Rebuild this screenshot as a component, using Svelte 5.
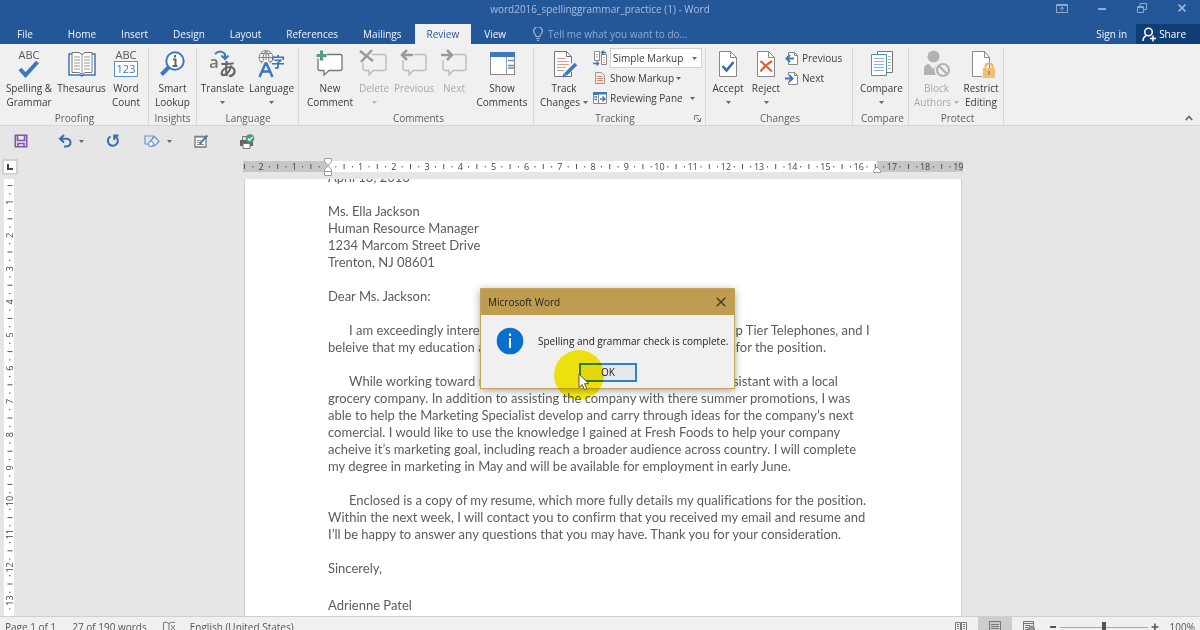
<script>
  const tabs = ['File', 'Home', 'Insert', 'Design', 'Layout', 'References', 'Mailings', 'Review', 'View'];
  let active = $state('Review');
  let markup = $state('Simple Markup');
  let zoom = $state(100);
  let dialogOpen = $state(true);

  const CM = 33.2;
  const hMarks = Array.from({ length: 87 }, (_, i) => i - 10);
  const vMarks = Array.from({ length: 53 }, (_, i) => i + 1);
</script>

{#snippet caret(dim = false)}
  <svg class="caret" width="5" height="3" viewBox="0 0 5 3" aria-hidden="true"><path d="M0 0h5L2.500 3z" fill={dim ? '#b5b5b5' : '#666'} /></svg>
{/snippet}

{#snippet icon(name)}
  <svg class="icon" width="28" height="28" viewBox="0 0 28 28" fill="none" aria-hidden="true">
    {#if name === 'spelling'}
      <text x="14" y="9" class="glyph" font-size="11" text-anchor="middle" fill="#555">ABC</text>
      <path d="M5 19l5.500 6L22.500 12" stroke="#3c78bd" stroke-width="4" />
    {:else if name === 'thesaurus'}
      <path d="M1 4h11l2 1 2-1h11v21H16l-2 1-2-1H1z" fill="#fff" stroke="#3c78bd" stroke-width="1.500" />
      <path d="M4 2.500h7l3 2 3-2h7v20h-7l-3 2-3-2H4z" fill="#fff" stroke="#777" />
      <path d="M14 5v19M6 7h6M6 10h6M6 13h6M6 16h6M6 19h6M16 7h6M16 10h6M16 13h6M16 16h6M16 19h6" stroke="#999" />
    {:else if name === 'count'}
      <text x="14" y="9" class="glyph" font-size="11" text-anchor="middle" fill="#555">ABC</text>
      <rect x="2.500" y="11.500" width="23" height="15" fill="#fff" stroke="#5b8fca" />
      <text x="14" y="23" class="glyph" font-size="11" text-anchor="middle" fill="#3c78bd">123</text>
    {:else if name === 'lookup'}
      <path d="M10 17L2.500 24.500" stroke="#3c78bd" stroke-width="4" />
      <circle cx="16" cy="11" r="8.700" fill="#fff" stroke="#3c78bd" stroke-width="2" />
      <path d="M16 5v2.500M14 9.500h2.500V16M13.500 16h5" stroke="#666" stroke-width="2" />
    {:else if name === 'translate'}
      <text x="0" y="18" class="glyph strong" font-size="17" fill="#777">a</text>
      <text x="10" y="26" class="glyph strong" font-size="18" fill="#666">あ</text>
      <path d="M6 4q5-5 10 0v4M12.500 5.500L16 9l3.500-3.500" stroke="#3c78bd" stroke-width="2" />
    {:else if name === 'language'}
      <circle cx="8" cy="7.500" r="7" stroke="#888" />
      <path d="M1 7.500h14M2.500 3.500h11M2.500 11.500h11M8 .5v14M8 .5q-6 7 0 14M8 .5q6 7 0 14" stroke="#888" />
      <text x="13" y="17" class="glyph strong" font-size="14" fill="#3c78bd">字</text>
      <path d="M1 27L7.500 12.500h1L15 27M4 21.500h8" stroke="#f0f0f0" stroke-width="5" />
      <path d="M1.500 27L7.500 13.500h1L14.500 27M4 21.500h8" stroke="#3c78bd" stroke-width="2.500" />
    {:else if name === 'newcomment'}
      <path d="M7 4.500h17q2 0 2 2v12q0 2-2 2H13L8 25v-4.500H4q-2 0-2-2v-10" fill="#fff" stroke="#777" stroke-width="1.300" />
      <path d="M5.500 0v11M0 5.500h11" stroke="#f0f0f0" stroke-width="5" />
      <path d="M5.500 .5v10M.5 5.500h10" stroke="#5a9b7c" stroke-width="3" />
    {:else if name === 'delete'}
      <path d="M12 4.500h12.500q1.500 0 1.500 1.500v13q0 1.500-1.500 1.500H13L9 25v-4.500H5q-2 0-2-1.500v-6" stroke="#bbb" stroke-width="1.300" />
      <path d="M0 1l13 10M12 0L1 12" stroke="#999" stroke-width="2.500" />
    {:else if name === 'prev'}
      <path d="M14 4.500h10.500q1.500 0 1.500 1.500v13q0 1.500-1.500 1.500H13L9 25v-4.500H5q-2 0-2-1.500v-9" stroke="#bbb" stroke-width="1.300" />
      <path d="M13 5H2M7 0L2 5l5 5" stroke="#999" stroke-width="2.500" />
    {:else if name === 'next'}
      <path d="M14 4.500h10.500q1.500 0 1.500 1.500v13q0 1.500-1.500 1.500H13L9 25v-4.500H5q-2 0-2-1.500v-9" stroke="#bbb" stroke-width="1.300" />
      <path d="M1 5h11M7 0l5 5-5 5" stroke="#999" stroke-width="2.500" />
    {:else if name === 'show'}
      <rect x="2.500" y="2.500" width="24" height="22" fill="#fff" stroke="#888" />
      <path d="M2 2h25v5H2z" fill="#3c78bd" />
      <path d="M18.500 7v17.500" stroke="#999" />
      <path d="M20 10.500h6M20 15.500h6M20 18h6" stroke="#5b8fca" stroke-width="1.500" />
    {:else if name === 'track'}
      <path d="M4.500 1.500h12l5 5v20h-17z" fill="#fff" stroke="#777" />
      <path d="M16.500 1.500v5h5" stroke="#777" />
      <path d="M7 8.500h8M7 11.500h12M7 14.500h12M7 17.500h9M7 20.500h7" stroke="#d99b80" />
      <path d="M25.500 13.500L15 24" stroke="#f0f0f0" stroke-width="6" />
      <path d="M26 14L15.500 24.500" stroke="#3c78bd" stroke-width="3.600" />
      <path d="M12.500 27.500l1-4.500 3.500 3.500z" fill="#3c78bd" />
    {:else if name === 'accept' || name === 'reject'}
      <path d="M5.500 1.500h11l6 6v19h-17z" fill="#fff" stroke="#888" />
      <path d="M16.500 1.500v6h6" stroke="#888" />
      {#if name === 'accept'}
        <path d="M8.500 16l4 4.500 7-8.500" stroke="#3c6cb0" stroke-width="2.600" />
      {:else}
        <path d="M8.500 11l11.500 10.500M20 11Q13 15 8.500 21.500" stroke="#dd6236" stroke-width="2.200" />
      {/if}
    {:else if name === 'compare'}
      <path d="M9.500 1.500h15v21h-15z" fill="#fff" stroke="#777" />
      <path d="M20 6.500h3M20 9.500h3M20 12.500h3M20 15.500h3M20 18.500h3" stroke="#aaa" />
      <path d="M3.500 4.500h15v21h-15z" fill="#fff" stroke="#5590a8" />
      <path d="M6 8.500h10M6 11.500h10M6 14.500h10M6 17.500h10M6 20.500h10" stroke="#8fb3d8" />
    {:else if name === 'block'}
      <circle cx="10.500" cy="6.500" r="6" fill="#b2b2b2" />
      <path d="M1 25v-6q0-4.500 5-5l4 5 4-5q4 0 5 4v7z" fill="#b2b2b2" />
      <circle cx="20" cy="20" r="8.500" fill="#f0f0f0" />
      <circle cx="20" cy="20" r="6" stroke="#b2b2b2" stroke-width="2.200" />
      <path d="M16 16l8 8" stroke="#b2b2b2" stroke-width="2.200" />
    {:else if name === 'restrict'}
      <path d="M5.500 1.500h12l5 6v19h-17z" fill="#fff" stroke="#888" />
      <path d="M17.500 1.500v6h5" stroke="#888" />
      <path d="M15 18h14v11H15z" fill="#f0f0f0" />
      <path d="M18.500 19v-2.500q0-3 3.500-3t3.500 3V19" stroke="#e3b766" stroke-width="2" />
      <path d="M16 18h12v10H16z" fill="#efc070" />
      <path d="M22 21v4" stroke="#b58a3c" stroke-width="1.500" />
    {/if}
  </svg>
{/snippet}

{#snippet mini(name)}
  <svg class="mini" width="16" height="16" viewBox="0 0 16 16" fill="none" aria-hidden="true">
    {#if name === 'simple'}
      <path d="M2.500 1.500h5v9h-5zM9.500 4.500h5v10h-5z" fill="#fff" stroke="#888" />
      <path d="M4 4.500h2M4 7h2M11 7.500h2M11 10h2M11 12.500h2" stroke="#d99b80" />
      <path d="M14 2.500H10M11.500 .5l-2 2 2 2M1 13.500h5M4.500 11.500l2 2-2 2" stroke="#3c78bd" stroke-width="1.400" />
    {:else if name === 'showmarkup'}
      <path d="M3.500 2.500h6l3 3v8h-9z" fill="#f8e9e3" stroke="#999" />
      <path d="M5 6.500h5M5 8.500h6M5 10.500h6" stroke="#d58a6b" />
    {:else if name === 'pane'}
      <path d="M1.500 2.500h13v11h-13z" fill="#fff" stroke="#888" />
      <path d="M1 2h14v2.500H1zM1 4h5v1H1z" fill="#3c78bd" />
      <path d="M6.500 4v9.500" stroke="#888" />
      <path d="M2.500 7h2.500M2.500 9.500h2.500M8 9h5M10.500 6.500L13 9l-2.500 2.500" stroke="#3c78bd" stroke-width="1.400" />
    {:else}
      <path d="M4.500 5V2.500h6l3 3v9h-9V12" fill="#fff" stroke="#888" />
      <path d="M10.500 2.500v3h3" stroke="#888" />
      {#if name === 'left'}
        <path d="M10 8.500H3M6 5L2.500 8.500 6 12" stroke="#3c78bd" stroke-width="2" />
      {:else}
        <path d="M1 8.500h7M5 5l3.500 3.500L5 12" stroke="#3c78bd" stroke-width="2" />
      {/if}
    {/if}
  </svg>
{/snippet}

{#snippet big(name, line1, line2, size, drop = '', disabled = false)}
  <button class="big {size}" {disabled}>
    {@render icon(name)}
    <span>{line1}</span>
    <span class="second">{line2}{#if drop}{@render caret(disabled)}{/if}</span>
  </button>
{/snippet}

<div class="app">
  <header class="title">
    <span></span>
    <h1>word2016_spellinggrammar_practice (1) - Word</h1>
    <div class="window">
      <button aria-label="Ribbon display options"><svg width="12" height="10" viewBox="0 0 12 10" fill="none" stroke="#8fa9cf"><path d="M.5 1.500h11v8H.5zM.5 2.500h11M6 8V4.500M4 6l2-2 2 2" /></svg></button>
      <button aria-label="Minimize"><svg width="12" height="10" viewBox="0 0 12 10"><path d="M2 5h8v2H2z" fill="#8fa9cf" /></svg></button>
      <button aria-label="Restore"><svg width="12" height="10" viewBox="0 0 12 10" fill="none" stroke="#8fa9cf"><path d="M1.500 3.500h6v6h-6zM4 3V.5h6.500v6H8M1.500 4.500h6" /></svg></button>
      <button aria-label="Close"><svg width="12" height="10" viewBox="0 0 12 10" fill="none" stroke="#a9bcda" stroke-width="1.600"><path d="M2.500 1.500l7 7M9.500 1.500l-7 7" /></svg></button>
    </div>
  </header>

  <nav class="tabs">
    {#each tabs as tab}
      <button class="tab" class:active={active === tab} onclick={() => (active = tab)}>{tab}</button>
    {/each}
    <label class="tell">
      <svg width="10" height="14" viewBox="0 0 10 14" fill="none" stroke="#9db6db" stroke-width="1.200"><path d="M3 9.500Q3 8 1.800 6.800a4.200 4.200 0 1 1 6.400 0Q7 8 7 9.500zM3.200 11.500h3.600M4 13.400h2" /></svg>
      <input type="text" placeholder="Tell me what you want to do..." aria-label="Tell me what you want to do" />
    </label>
    <button class="signin">Sign in</button>
    <button class="share">
      <svg width="14" height="15" viewBox="0 0 14 15" fill="none" stroke="#fff" stroke-width="1.500"><circle cx="6.500" cy="5" r="3.800" /><path d="M1 14q0-4 3.500-5.500M11 8.500v6M8 11.500h6" /></svg>
      Share
    </button>
  </nav>

  <section class="ribbon" aria-label="Review">
    <div class="group proofing">
      <div class="body">
        {@render big('spelling', 'Spelling &', 'Grammar', 'w56')}
        {@render big('thesaurus', 'Thesaurus', '', 'w48')}
        {@render big('count', 'Word', 'Count', 'w40')}
      </div>
      <h2>Proofing</h2>
    </div>
    <div class="group insights">
      <div class="body">{@render big('lookup', 'Smart', 'Lookup', 'w48')}</div>
      <h2>Insights</h2>
    </div>
    <div class="group language">
      <div class="body">
        {@render big('translate', 'Translate', '', 'w48', 'y')}
        {@render big('language', 'Language', '', 'w48', 'y')}
      </div>
      <h2>Language</h2>
    </div>
    <div class="group comments">
      <div class="body">
        {@render big('newcomment', 'New', 'Comment', 'w52')}
        {@render big('delete', 'Delete', '', 'w36', 'y', true)}
        {@render big('prev', 'Previous', '', 'w44', '', true)}
        {@render big('next', 'Next', '', 'w36', '', true)}
        {@render big('show', 'Show', 'Comments', 'w60')}
      </div>
      <h2>Comments</h2>
    </div>
    <div class="group tracking">
      <div class="body">
        {@render big('track', 'Track', 'Changes', 'w56', 'y')}
        <div class="stack">
          <label class="row">
            {@render mini('simple')}
            <span class="combo">
              <select bind:value={markup} aria-label="Display for review">
                <option>Simple Markup</option>
                <option>All Markup</option>
                <option>No Markup</option>
                <option>Original</option>
              </select>
              {@render caret()}
            </span>
          </label>
          <button class="row">{@render mini('showmarkup')}Show Markup{@render caret()}</button>
          <button class="row">{@render mini('pane')}Reviewing Pane<span class="split">{@render caret()}</span></button>
        </div>
      </div>
      <div class="foot">
        <h2>Tracking</h2>
        <button class="launcher" aria-label="Tracking options"><svg width="7" height="7" viewBox="0 0 7 7" fill="none" stroke="#777"><path d="M.5 5V.5H5M2.500 2.500l4 4M6.500 3v3.500H3" /></svg></button>
      </div>
    </div>
    <div class="group changes">
      <div class="body">
        {@render big('accept', 'Accept', '', 'w40', 'y')}
        {@render big('reject', 'Reject', '', 'w36', 'y')}
        <div class="stack">
          <button class="row">{@render mini('left')}Previous</button>
          <button class="row">{@render mini('right')}Next</button>
        </div>
      </div>
      <h2>Changes</h2>
    </div>
    <div class="group compare">
      <div class="body">{@render big('compare', 'Compare', '', 'w48', 'y')}</div>
      <h2>Compare</h2>
    </div>
    <div class="group protect">
      <div class="body">
        {@render big('block', 'Block', 'Authors', 'w48', 'y', true)}
        {@render big('restrict', 'Restrict', 'Editing', 'w40')}
      </div>
      <h2>Protect</h2>
    </div>
    <button class="collapse" aria-label="Collapse the ribbon"><svg width="8" height="6" viewBox="0 0 8 6" fill="none" stroke="#666" stroke-width="1.800"><path d="M.8 5L4 1.500 7.200 5" /></svg></button>
  </section>

  <div class="quick">
    <button aria-label="Save" class="save"><svg width="14" height="14" viewBox="0 0 14 14" fill="none" stroke="#8257a5" stroke-width="1.600"><path d="M1.300 1.300h11.400v11.400H1.300zM3.500 1.500v5h7v-5M4 12.500V9.500h6v3" /></svg></button>
    <button aria-label="Undo" class="drop"><svg width="14" height="14" viewBox="0 0 14 14" fill="none" stroke="#3c6cb0" stroke-width="2"><path d="M6 1L2 4.800 6 8.500M2 4.800h6q4.500 0 4.500 3.700T8 12.500H6" /></svg>{@render caret()}</button>
    <button aria-label="Repeat" class="repeat"><svg width="14" height="14" viewBox="0 0 14 14" fill="none" stroke="#3c6cb0" stroke-width="2"><path d="M9.500 2.500a5 5 0 1 1-5-.2M12.500 1.500H8.300V6" /></svg></button>
    <button aria-label="Shapes" class="drop"><svg width="16" height="14" viewBox="0 0 16 14" fill="none" stroke="#6d94c8" stroke-width="1.200"><path d="M1 2h8v8H1z" /><path d="M10.500 2.500L15 7.500l-4.500 4.500L6 7.500z" fill="#e9eef5" /><circle cx="7" cy="10" r="2.500" fill="#fff" /></svg>{@render caret()}</button>
    <button aria-label="Edit document"><svg width="14" height="14" viewBox="0 0 14 14" fill="none"><path d="M1 2.500h11v10.500H1z" fill="#fff" stroke="#777" stroke-width="1.300" /><path d="M1 3h11M3 6.500h4M3 8.500h3M3 10.500h7" stroke="#888" /><path d="M13.300 1.500L7 8.500l-1 2" stroke="#3c78bd" stroke-width="2" /></svg></button>
    <button aria-label="Print preview" class="print"><svg width="16" height="15" viewBox="0 0 16 15" fill="none"><path d="M1 6h13v6H1z" fill="#666" /><path d="M3.500 6V2.500h5" stroke="#777" /><path d="M4 9.500h7v5H4z" fill="#fff" stroke="#777" /><circle cx="11" cy="4.500" r="4.300" fill="#4c9b78" /><path d="M8.800 4.500l1.700 1.800 3-3.500" stroke="#fff" stroke-width="1.300" /></svg></button>
  </div>

  <main class="work">
    <div class="corner"><svg width="6" height="6" viewBox="0 0 6 6"><path d="M1 0v5h5" fill="none" stroke="#444" stroke-width="2" /></svg></div>
    <div class="hruler">
      <svg width="720" height="20" viewBox="0 0 720 20" aria-hidden="true">
        <path d="M0 4h720v11H0z" fill="#c6c6c6" />
        <path d="M85 4h549v11H85z" fill="#fff" />
        {#each hMarks as m}
          {@const x = 84.5 + (m * CM) / 4}
          {#if m % 4 === 0}
            {#if m !== 0}<text {x} y="13" class="num" text-anchor="middle">{Math.abs(m / 4)}</text>{/if}
          {:else if m % 2 === 0}
            <rect x={x - 0.5} y="7" width="1" height="5" fill="#555" />
          {:else if m < 76}
            <rect x={x - 0.5} y="9" width="1" height="1.500" fill="#555" />
          {/if}
        {/each}
        <path d="M81.500 1.500h7v3l-3.500 4 3.500 4v2h-7v-2l3.500-4-3.500-4zM81.500 14.500h7v4h-7z" fill="#fff" stroke="#999" />
        <path d="M630.500 15.500v-2l3.500-3.500 3.500 3.500v2z" fill="#fff" stroke="#999" />
      </svg>
    </div>
    <div class="vruler">
      <svg width="10" height="436" viewBox="0 0 10 436" aria-hidden="true">
        {#each vMarks as m}
          {@const y = -10 + (m * CM) / 4}
          {#if m % 4 === 0}
            <text class="num" text-anchor="middle" transform="translate(9 {y}) rotate(-90)">{m / 4}</text>
          {:else if m % 2 === 0}
            <rect x="3.500" y={y - 0.5} width="5" height="1" fill="#555" />
          {:else if y > 0}
            <rect x="5" y={y - 0.5} width="1.500" height="1" fill="#555" />
          {/if}
        {/each}
      </svg>
    </div>
    <div class="stage">
      <article class="page">
        <p>April 13, 2016</p>
        <p>Ms. Ella Jackson<br />Human Resource Manager<br />1234 Marcom Street Drive<br />Trenton, NJ 08601</p>
        <p>Dear Ms. Jackson:</p>
        <p class="indent">I am exceedingly interested in the Marketing Assistant position at Top Tier Telephones, and I<br />beleive that my education and experience make me a perfect candidate for the position.</p>
        <p class="indent">While working toward my degree, I was employed as a marketing assistant with a local<br />grocery company. In addition to assisting the company with there summer promotions, I was<br />able to help the Marketing Specialist develop and carry through ideas for the company’s next<br />comercial. I would like to use the knowledge I gained at Fresh Foods to help your company<br />acheive it’s marketing goal, including reach a broader audience across country. I will complete<br />my degree in marketing in May and will be available for employment in early June.</p>
        <p class="indent">Enclosed is a copy of my resume, which more fully details my qualifications for the position.<br />Within the next week, I will contact you to confirm that you received my email and resume and<br />I’ll be happy to answer any questions that you may have. Thank you for your consideration.</p>
        <p class="closing">Sincerely,</p>
        <p>Adrienne Patel</p>
      </article>
    </div>
  </main>

  <footer class="status">
    <span class="pages">Page 1 of 1</span>
    <span class="words">27 of 190 words</span>
    <svg class="proof" width="13" height="12" viewBox="0 0 13 12" fill="none" stroke="#777"><path d="M6 2.500Q3.500 .5 .5 1.500v8.500q3-.5 5.500 1V2.500Q8 .5 12 1.500M6 11q2-1.500 5-1M8 4l4 5M12 4L8 9" /></svg>
    <span class="lang">English (United States)</span>
    <button class="view" aria-label="Read mode"><svg width="12" height="12" viewBox="0 0 12 12" fill="none" stroke="#777"><path d="M.5 1.500h5v9h-5zM6.500 1.500h5v9h-5zM2 3.500h2M2 5.500h2M2 7.500h2M8 3.500h2M8 5.500h2M8 7.500h2" /></svg></button>
    <button class="view on" aria-label="Print layout"><svg width="12" height="12" viewBox="0 0 12 12" fill="none" stroke="#777"><path d="M.5 .5h11v11H.5zM2 3.500h8M2 5.500h8M2 7.500h8M2 9.500h8" /></svg></button>
    <button class="view" aria-label="Web layout"><svg width="12" height="12" viewBox="0 0 12 12" fill="none" stroke="#777"><path d="M4.500 10.500h-4V.5h10V5M.5 2.500h10M2 4.500h5M2 6.500h3M2 8.500h3" /><circle cx="8.500" cy="8" r="3" fill="#999" /></svg></button>
    <button class="step" aria-label="Zoom out" onclick={() => (zoom -= 10)}><svg width="8" height="8" viewBox="0 0 8 8"><path d="M1 3h6v2H1z" fill="#555" /></svg></button>
    <input type="range" min="10" max="190" bind:value={zoom} aria-label="Zoom" />
    <button class="step" aria-label="Zoom in" onclick={() => (zoom += 10)}><svg width="8" height="8" viewBox="0 0 8 8"><path d="M.5 3.200h7v1.600h-7zM3.200 .5h1.600v7H3.200z" fill="#555" /></svg></button>
    <output>{zoom}%</output>
  </footer>

  {#if dialogOpen}
    <div class="dialog" role="alertdialog" aria-labelledby="dlg-title" aria-describedby="dlg-text">
      <div class="bar">
        <span id="dlg-title">Microsoft Word</span>
        <button aria-label="Close dialog" onclick={() => (dialogOpen = false)}><svg width="10" height="10" viewBox="0 0 10 10" fill="none" stroke="#3d3526" stroke-width="1.300"><path d="M.7 .7l8.600 8.600M9.300 .7L.7 9.300" /></svg></button>
      </div>
      <div class="message">
        <svg width="28" height="28" viewBox="0 0 28 28"><circle cx="14" cy="14" r="13.300" fill="#0a70cb" /><path d="M13 11h2v10h-2zM13 6.500h2v2.500h-2z" fill="#fff" /></svg>
        <p id="dlg-text">Spelling and grammar check is complete.</p>
      </div>
      <button class="ok" onclick={() => (dialogOpen = false)}>OK</button>
    </div>
  {/if}
  <div class="halo"></div>
  <svg class="pointer" width="13" height="18" viewBox="0 0 13 18" aria-hidden="true"><path d="M1 1v13.500l3.200-3 2.300 5.200 2.300-1-2.300-5H11z" fill="#fff" stroke="#555" /></svg>
</div>

<style>
  :global(body) { background: #e6e6e6; }
  .app {
    position: relative; display: flex; flex-direction: column;
    height: 100vh; overflow: hidden;
    font: 10px/14px "Open Sans", "Noto Sans", "Noto Sans CJK JP", sans-serif;
    color: #3a3a3a; background: #e6e6e6;
  }
  button, input, select { font: inherit; color: inherit; background: none; border: 0; padding: 0; margin: 0; }
  svg { display: block; flex: none; }
  h1, h2, p { margin: 0; font: inherit; }
  .glyph { font-family: "Open Sans", "Noto Sans CJK JP", sans-serif; }
  .strong { font-weight: 600; }

  .title { display: grid; grid-template-columns: 1fr auto 1fr; background: #245798; height: 24px; color: #a9bedd; }
  .title h1 { line-height: 19px; }
  .window { display: flex; justify-content: flex-end; gap: 28px; padding: 3px 12px 0 0; }
  .window button { height: 10px; }

  .tabs { display: flex; gap: 1px; background: #245798; height: 20px; color: #f2f6fc; }
  .tab { padding: 0 12px; white-space: nowrap; }
  .tab:first-child { padding: 0 22px 0 17px; }
  .tab.active { background: #f0f0f0; color: #2b5797; }
  .tell { display: flex; align-items: center; gap: 5px; flex: 1; padding-left: 14px; }
  .tell input { flex: 1; min-width: 0; }
  .tell input::placeholder { color: #8fabd5; opacity: 1; }
  .signin { padding: 0 8px; white-space: nowrap; }
  .share { display: flex; align-items: center; gap: 3px; padding: 0 14px 0 6px; background: #0f3d76; color: #fff; }

  .ribbon { display: flex; background: #f0f0f0; border-bottom: 1px solid #d6d6d6; }
  .group { display: flex; flex-direction: column; flex: none; box-sizing: border-box; margin: 4px 0 0; border-right: 1px solid #d8d8d8; }
  .group h2 { text-align: center; color: #5e5e5e; }
  .body { display: flex; flex: 1; min-height: 63px; }
  .proofing { width: 149px; padding-left: 1px; }
  .insights { width: 48px; }
  .language { width: 102px; padding-left: 1px; }
  .comments { width: 235px; padding-left: 5px; }
  .tracking { width: 172px; padding-left: 2px; }
  .changes { width: 147px; padding-left: 2px; }
  .compare { width: 56px; padding-left: 4px; }
  .protect { width: 95px; padding-left: 3px; }
  .big { display: flex; flex-direction: column; align-items: center; padding-top: 2px; white-space: nowrap; }
  .big .icon { margin-bottom: 3px; overflow: visible; }
  .big:disabled { color: #a8a8a8; }
  .second { display: flex; align-items: center; justify-content: center; gap: 3px; min-height: 14px; }
  .w36 { width: 36px; }
  .w40 { width: 40px; }
  .w44 { width: 44px; }
  .w48 { width: 49px; }
  .w52 { width: 52px; }
  .w56 { width: 56px; }
  .w60 { width: 60px; }
  .stack { display: flex; flex-direction: column; align-items: flex-start; }
  .row { display: flex; align-items: center; height: 20px; gap: 2px; white-space: nowrap; }
  .combo { display: flex; align-items: center; box-sizing: border-box; height: 20px; width: 92px; padding: 0 4px 0 2px; background: #fff; border: 1px solid #d0d0d0; }
  .combo select { appearance: none; flex: 1; min-width: 0; outline: 0; }
  .split { padding-left: 5px; }
  .foot { display: grid; grid-template-columns: 1fr auto; align-items: center; }
  .launcher { padding-right: 4px; }
  .collapse { margin: auto 7px 4px auto; }

  .quick { display: flex; align-items: center; gap: 22px; height: 31px; padding: 0 0 1px 14px; box-sizing: border-box; }
  .quick .save { padding-right: 8px; }
  .quick .repeat { padding-right: 2px; }
  .quick .drop { display: flex; align-items: center; gap: 7px; }
  .quick .print { padding-left: 9px; }

  .work { flex: 1; min-height: 0; display: grid; grid-template-columns: 18px minmax(0, 1fr) 12px; grid-template-rows: 22px minmax(0, 1fr); }
  .corner { display: grid; place-items: center; width: 12px; height: 12px; margin: 2px 0 0 2px; background: #fff; border: 2px solid #d2d2d2; }
  .hruler { display: flex; justify-content: center; grid-column: 2; }
  .vruler { background: #fff; width: 10px; margin-left: 4px; grid-area: 2 / 1; min-height: 0; }
  .vruler svg { overflow: visible; }
  .num { font-size: 9px; fill: #444; }
  .stage { grid-area: 2 / 2; display: flex; justify-content: center; overflow: hidden; }
  .page { box-sizing: border-box; width: 718px; padding: 0 83px; background: #fff; border: solid #d0d0d0; border-width: 0 1px; font: 13px/17px Lato, Carlito, sans-serif; font-variant-ligatures: none; color: #5c5c5c; white-space: nowrap; overflow: hidden; }
  .page p { margin-bottom: 17px; }
  .page p:first-child { margin-top: -10px; }
  .page .indent { text-indent: 21px; }
  .page .closing { margin-bottom: 20px; }

  .status { display: flex; align-items: center; flex: none; height: 20px; margin-bottom: -7px; background: #f0f0f0; border-top: 1px solid #cfcfcf; padding: 0 5px; color: #555; }
  .words { padding-left: 16px; }
  .proof { margin: 0 14px 0 16px; }
  .lang { flex: 1; }
  .view { display: grid; place-items: center; width: 34px; height: 20px; }
  .view.on { background: #cdcdcd; }
  .step { padding: 0 3px; }
  input[type='range'] { appearance: none; width: 88px; height: 14px; background: linear-gradient(#aaa, #aaa) center / 100% 1px no-repeat; }
  input[type='range']::-webkit-slider-thumb { appearance: none; width: 4px; height: 10px; background: #555; }
  output { padding-left: 8px; }

  .dialog { position: absolute; left: 480px; top: 288px; width: 253px; padding-bottom: 6px; background: #f0f0f0; border: 1px solid #c2a25c; box-shadow: 0 2px 8px rgba(0, 0, 0, .35); color: #222; }
  .bar { display: flex; align-items: center; justify-content: space-between; height: 26px; padding: 0 8px 0 7px; background: #c09c50; }
  .message { display: flex; align-items: center; gap: 14px; height: 48px; padding: 3px 0 0 15px; box-sizing: border-box; white-space: nowrap; }
  .ok { display: block; box-sizing: border-box; width: 58px; height: 19px; margin-left: 98px; line-height: 15px; background: #e8e8ea; border: 2px solid #2b84d0; }
  .halo { position: absolute; left: 554px; top: 350px; width: 50px; height: 50px; border-radius: 50%; background: #fbee10; mix-blend-mode: multiply; pointer-events: none; }
  .pointer { position: absolute; left: 578px; top: 373px; pointer-events: none; }
</style>
